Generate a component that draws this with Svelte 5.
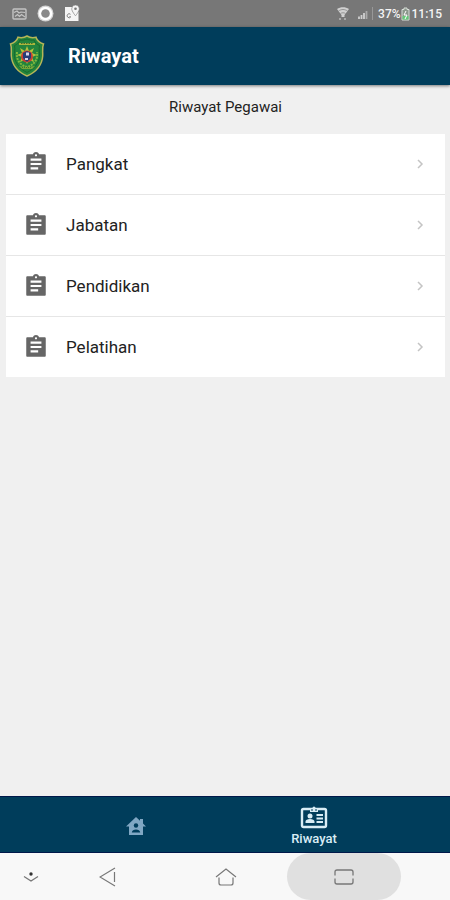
<script>
  const items = ['Pangkat', 'Jabatan', 'Pendidikan', 'Pelatihan'];
</script>

<div class="app">
  <div class="status">
    <div class="group notices">
      <svg width="15" height="12" viewBox="0 0 15 12" aria-hidden="true">
        <rect x="1" y="1" width="13" height="10" rx="1" fill="none" stroke="#c4c4c4" stroke-width="1.4" />
        <path d="M2 4.500l3-1.500 2 2 2-1 4 .5M3 8.500l2.500-2 2 2 2-2L13 9" fill="none" stroke="#c4c4c4" stroke-width="1.2" />
      </svg>
      <svg width="17" height="17" viewBox="0 0 17 17" aria-hidden="true">
        <circle cx="8.500" cy="8.500" r="8" fill="#d4d4d4" />
        <circle cx="8.500" cy="8.500" r="6.800" fill="#fff" />
        <circle cx="8.500" cy="8.500" r="4.300" fill="#8a8a8a" />
      </svg>
      <svg width="16" height="17" viewBox="0 0 16 17" aria-hidden="true">
        <path d="M1 2h7.500c-.8 3 .5 5 2.500 7.500l2-2.500h1.500v9H1z" fill="#f4f4f4" />
        <path d="M11.500 0a3.800 3.800 0 0 0-3.800 3.800c0 2.500 3.800 7 3.800 7s3.800-4.500 3.800-7A3.800 3.800 0 0 0 11.500 0z" fill="#f4f4f4" stroke="#777" stroke-width=".6" />
        <circle cx="11.500" cy="3.800" r="1.300" fill="#777" />
        <path d="M6.500 9.300a2 2 0 1 0 .3 2.500H5.200" fill="none" stroke="#858585" />
      </svg>
    </div>
    <div class="group signals">
      <svg width="14" height="15" viewBox="0 0 14 15" aria-hidden="true">
        <path d="M1 3c3.500-2.500 8.500-2.500 12 0L8.500 9v2h-3V9z" fill="#d0d0d0" />
        <path d="M2.500 5c3-2 6-2 9 0M4.500 7.500c1.500-1 3.500-1 5 0" fill="none" stroke="#858585" stroke-width=".8" />
        <path d="M4 12v2M9 12v2" stroke="#bdbdbd" stroke-width="1.4" />
      </svg>
      <svg class="bars" width="16" height="13" viewBox="0 0 16 13" aria-hidden="true">
        <path d="M1 12V9.500M3.500 12V8M6 12V6" stroke="#d0d0d0" stroke-width="1.800" />
        <path d="M8.500 12V4" stroke="#aaa" stroke-width="1.800" />
        <path d="M14.500 0v13" stroke="#989898" />
      </svg>
      <span>37%</span>
      <svg width="9" height="14" viewBox="0 0 9 14" aria-hidden="true">
        <path d="M1 2.500h2V1h3v1.500h2V13H1z" fill="#8b978b" stroke="#d8ded8" />
        <path d="M1.500 9h6v3.500h-6z" fill="#64c878" />
        <path d="M5 4L3 8h3l-2 4" fill="none" stroke="#fff" />
      </svg>
      <span class="time">11:15</span>
    </div>
  </div>

  <header>
    <svg class="crest" width="36" height="42" viewBox="0 0 36 42" aria-hidden="true">
      <path d="M18 1c-3 1.800-6 2-9 1.200-1 3.200-3.500 5.500-7.500 6.800 1.800 4 .5 8 .8 12C3 31 9 37 18 41c9-4 15-10 15.700-20 .3-4-1-8 .8-12-4-1.300-6.500-3.600-7.500-6.800C24 3 21 2.800 18 1z" fill="#23843c" stroke="#b6b657" stroke-width="1.500" />
      <path d="M18 4c-2.500 1-4.500 1.500-7 1-1.200 3-3 4.500-5.500 5.500 1 4-.5 7 0 11C6.500 29 11 34 18 37.500 25 34 29.500 29 30.500 21.500c.5-4-1-7 0-11C28 9.500 26.200 8 25 5c-2.500.5-4.500 0-7-1z" fill="none" stroke="#176a2c" />
      <path d="M10 9h16" stroke="#a9b63c" stroke-width="2" />
      <path d="M12 8.500h12" stroke="#315b27" stroke-width=".8" stroke-dasharray="1.500 1" />
      <path d="M18 11l2 5 5-3-2 5 5 2-5 2 2 5-5-2-2 4-2-4-5 2 2-5-5-2 5-2-2-5 5 3z" fill="#b3c13d" />
      <path d="M8 17c-1 8 3 13 10 15 7-2 11-7 10-15" fill="none" stroke="#80b83e" stroke-width="2" stroke-dasharray="2 1" />
      <circle cx="18" cy="21.500" r="6" fill="#c74332" />
      <path d="M14 18l4-2 4 2v5l-4 4-4-4z" fill="#263d78" />
      <path d="M17 17.500h3v3h-3zM16 23h3v2h-3z" fill="#d8d5e8" />
      <path d="M10 31c4 1 12 1 16 0l-3 3H13z" fill="#78a538" />
      <path d="M13 32.500h10" stroke="#397630" stroke-dasharray="1 1" />
    </svg>
    <h1>Riwayat</h1>
  </header>

  <main>
    <h2>Riwayat Pegawai</h2>
    <ul>
      {#each items as item}
        <li>
          <button class="row" type="button">
            <svg width="26" height="26" viewBox="0 0 24 24" aria-hidden="true">
              <path fill="#666" d="M20 3h-5.180C14.400 1.840 13.300 1 12 1c-1.300 0-2.400.84-2.820 2H4c-.55 0-1 .45-1 1v16c0 .55.45 1 1 1h16c.55 0 1-.45 1-1V4c0-.55-.45-1-1-1zm-8 0c.55 0 1 .45 1 1s-.45 1-1 1-1-.45-1-1 .45-1 1-1zm2 14H7v-2h7v2zm3-4H7v-2h10v2zm0-4H7V7h10v2z" />
            </svg>
            <span>{item}</span>
            <svg width="8" height="10" viewBox="0 0 8 10" aria-hidden="true">
              <path d="M2 1l4 4-4 4" fill="none" stroke="#c4c4c4" stroke-width="1.500" />
            </svg>
          </button>
        </li>
      {/each}
    </ul>
  </main>

  <nav class="tabs" aria-label="Menu">
    <button type="button" aria-label="Beranda">
      <svg width="20" height="19" viewBox="0 0 20 19" aria-hidden="true">
        <path d="M10 0L0 9.500h3V18h14V9.500h3l-3-3V2h-3v1.800z" fill="#80a7c3" />
        <circle cx="10" cy="8.500" r="2.200" fill="#003d5b" />
        <path d="M5.800 15.500c0-4 8.400-4 8.400 0z" fill="#003d5b" />
      </svg>
    </button>
    <button type="button" aria-current="page">
      <svg width="28" height="23" viewBox="0 0 28 23" aria-hidden="true">
        <rect x="2" y="3" width="24" height="18" rx="1.500" fill="none" stroke="#d9edf5" stroke-width="2.400" />
        <path d="M10 2h2.500a1.500 1.500 0 0 1 3 0H18v4h-8z" fill="#d9edf5" />
        <path d="M12 3v2M16 3v2" stroke="#003d5b" />
        <circle cx="10" cy="10" r="2.500" fill="#d9edf5" />
        <path d="M5.500 17v-1.500c0-1.500 2-2.500 4.500-2.500s4.500 1 4.500 2.500V17zM16.500 8H23v2h-6.500zM16.500 11.500H23v2h-6.500zM16.500 15H23v2h-6.500z" fill="#d9edf5" />
      </svg>
      <span>Riwayat</span>
    </button>
  </nav>

  <nav class="system" aria-label="Sistem">
    <button class="hide" type="button" aria-label="Sembunyikan">
      <svg width="16" height="12" viewBox="0 0 16 12" aria-hidden="true">
        <circle cx="8" cy="3" r="1.700" fill="#333" />
        <path d="M1 5.500l7 4.500 7-4.500" fill="none" stroke="#777" stroke-width="1.300" />
      </svg>
    </button>
    <button type="button" aria-label="Kembali">
      <svg width="18" height="20" viewBox="0 0 18 20" aria-hidden="true">
        <path d="M16 1L1 10l15 9M15.500 5v10" fill="none" stroke="#777" stroke-width="1.200" />
      </svg>
    </button>
    <button type="button" aria-label="Layar utama">
      <svg width="22" height="18" viewBox="0 0 22 18" aria-hidden="true">
        <path d="M1 9l10-8 10 8M4 9.500V15q0 2 2 2h10q2 0 2-2V9.500" fill="none" stroke="#777" stroke-width="1.200" />
      </svg>
    </button>
    <button class="pressed" type="button" aria-label="Terbaru">
      <svg width="20" height="16" viewBox="0 0 20 16" aria-hidden="true">
        <path d="M1 6.500V3q0-2 2-2h14q2 0 2 2v3.500M1 9.500V13q0 2 2 2h14q2 0 2-2V9.500" fill="none" stroke="#777" stroke-width="1.300" />
      </svg>
    </button>
  </nav>
</div>

<style>
  :global(body) {
    margin: 0;
  }

  .app {
    display: flex;
    flex-direction: column;
    min-height: 100vh;
    background: #f0f0f0;
    color: #222;
    font-family: Roboto, "Liberation Sans", sans-serif;
  }

  button {
    margin: 0;
    padding: 0;
    border: 0;
    background: none;
    color: inherit;
    font: inherit;
    cursor: pointer;
  }

  svg {
    display: block;
    flex: none;
  }

  .status {
    display: flex;
    align-items: center;
    justify-content: space-between;
    box-sizing: border-box;
    height: 27px;
    padding: 0 8px 0 12px;
    background: #777;
    color: #f4f4f4;
    font-size: 12px;
    font-weight: 500;
  }

  .group {
    display: flex;
    align-items: center;
  }

  .notices {
    gap: 10px;
  }

  .bars {
    margin: 0 4px 0 8px;
  }

  .time {
    margin-left: 2px;
  }

  header {
    display: flex;
    align-items: center;
    gap: 23px;
    height: 58px;
    padding: 0 9px;
    background: #003d5b;
    box-shadow: 0 1px 3px rgba(0, 0, 0, 0.5);
    color: #fff;
  }

  h1 {
    margin: 0;
    font-size: 20px;
    font-weight: 700;
    line-height: 24px;
  }

  main {
    flex: 1;
    padding: 12px 5px 12px 6px;
  }

  h2 {
    margin: 0 0 17px;
    font-size: 15px;
    font-weight: 400;
    line-height: 20px;
    text-align: center;
  }

  ul {
    margin: 0;
    padding: 0;
    list-style: none;
    background: #fff;
  }

  li + li {
    border-top: 1px solid #e6e6e6;
  }

  .row {
    display: flex;
    align-items: center;
    gap: 17px;
    width: 100%;
    height: 60px;
    padding: 0 21px 0 17px;
    font-size: 17px;
    text-align: left;
  }

  .row span {
    flex: 1;
  }

  .tabs {
    display: flex;
    box-sizing: border-box;
    height: 57px;
    padding: 0 47px;
    border: solid #00194a;
    border-width: 1px 0;
    background: #003d5b;
  }

  .tabs button {
    display: flex;
    flex: 1;
    flex-direction: column;
    align-items: center;
    justify-content: center;
    padding-top: 4px;
    color: #d9edf5;
    font-size: 13px;
    font-weight: 500;
    line-height: 16px;
  }

  .tabs span {
    margin-top: 2px;
  }

  .system {
    display: grid;
    grid-template-columns: 49fr 118fr 118fr 118fr 47fr;
    height: 47px;
    background: #f8f8f8;
  }

  .system button {
    display: flex;
    align-items: center;
    justify-content: center;
  }

  .system .hide {
    padding-left: 12px;
  }

  .system .pressed {
    margin: 0 2px;
    border-radius: 24px;
    background: #e0e0e0;
  }
</style>
